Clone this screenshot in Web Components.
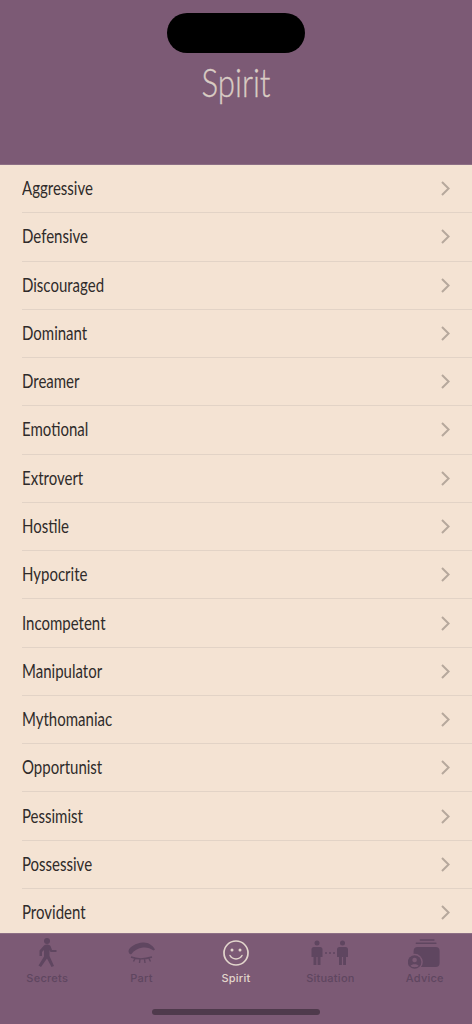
<!DOCTYPE html>
<html><head><meta charset="utf-8"><style>
html,body{margin:0;padding:0;width:472px;height:1024px;overflow:hidden;background:#f4e3d3}
</style></head><body>
<template id="sc"><style>:host{display:block;position:relative;width:472px;height:1024px;overflow:hidden;background:#f4e3d3}</style><slot></slot></template>
<template id="h"><style>
:host{display:block;height:165px;background:#7c5a75;box-sizing:border-box;position:relative;border-bottom:1px solid #8d6f85}
.island{position:absolute;left:167px;top:13px;width:138px;height:40px;border-radius:20px;background:#000}
.t{display:block;text-align:center;padding-top:59px;font:300 39px/46px Lato,sans-serif;-webkit-text-stroke:.35px #d9ccc4;color:#d9ccc4;transform:scaleX(.8);transform-origin:50% 0}
</style><div class="island"></div><span class="t"><slot></slot></span></template>
<template id="r"><style>
:host{display:block;height:48.27px;padding-left:22px;box-sizing:border-box}
.w{height:100%;box-sizing:border-box;border-bottom:1px solid #e2d3c6;display:flex;align-items:center;justify-content:space-between;padding-right:22px}
.l{display:inline-block;padding-bottom:3px;font:400 20px/24px Lato,sans-serif;color:#2f2b2a;white-space:nowrap;transform:scaleX(.75);transform-origin:0 50%}
svg{width:9px;height:15px;display:block}
</style><div class="w"><span class="l"><slot></slot></span><svg viewBox="0 0 9 15"><path d="M1 1l6.600 6.500L1 14" fill="none" stroke="#b6a89c" stroke-width="2"/></svg></div></template>
<template id="tb"><style>
:host{display:block;position:absolute;left:0;right:0;bottom:0;height:91px;background:#7c5a75;border-top:1px solid #8d6f85;box-sizing:border-box}
.g{display:grid;grid-template-columns:repeat(5,1fr)}
.bar{position:absolute;left:152px;top:75px;width:168px;height:6px;border-radius:3px;background:#4f3a4c}
</style><div class="g"><slot></slot></div><div class="bar"></div></template>
<template id="ti"><style>
:host{display:flex;flex-direction:column;align-items:center;color:#5f4660}
:host([active]){color:#e2d5cc}
.i{height:32px;width:44px;display:flex;align-items:center;justify-content:center;margin-top:3px}
.l{font:500 11px/13px Inter,"Liberation Sans",sans-serif;margin-top:2.5px;letter-spacing:.25px;text-rendering:geometricPrecision}
</style><div class="i"><slot name="icon"></slot></div><span class="l"><slot></slot></span></template>
<script>
function def(n,id){customElements.define(n,class extends HTMLElement{constructor(){super();this.attachShadow({mode:'open'}).appendChild(document.getElementById(id).content.cloneNode(true))}})}
def('app-screen','sc');def('app-header','h');def('list-row','r');def('tab-bar','tb');def('tab-item','ti');
const items=["Aggressive","Defensive","Discouraged","Dominant","Dreamer","Emotional","Extrovert","Hostile","Hypocrite","Incompetent","Manipulator","Mythomaniac","Opportunist","Pessimist","Possessive","Provident"];
const icons={
Secrets:'<svg slot="icon" width="24" height="30" viewBox="0 0 24 30" fill="currentColor"><circle cx="12" cy="3" r="3"/><path d="M9 7.500C10.500 6 14 6 15.500 8L17 12H21.500V14H15.500L14.500 12V18L19 28L16.500 29L12 20.500L6 29L3.500 27.500L9 18.500V12L7 14V18H4.500V12.500z"/></svg>',
Part:'<svg slot="icon" width="28" height="26" viewBox="0 0 28 26" fill="currentColor"><path d="M.5 11C1 7 8 3 15 2.500C20 2.200 24.500 5 27 9.500L25.500 10.500C22 8 19 7 15 7.500C10 8.200 6 10.500 3.500 14C2 15 .5 13 .5 11z"/><path d="M3 17C8 19 16 19.500 24 17M7 18.500L5.500 21.500M12 19L11.500 23M16.500 19L17 23M21 18.500L22.500 21.500" fill="none" stroke="currentColor" stroke-width="1.400"/></svg>',
Spirit:'<svg slot="icon" width="26" height="26" viewBox="0 0 26 26" fill="none" stroke="currentColor"><circle cx="13" cy="13" r="12" stroke-width="1.700"/><circle cx="9" cy="10" r="1.500" fill="currentColor" stroke="none"/><circle cx="17" cy="10" r="1.500" fill="currentColor" stroke="none"/><path d="M7 15.500c2.500 4.500 9.500 4.500 12 0" stroke-width="1.500" stroke-linecap="round"/></svg>',
Situation:'<svg slot="icon" width="38" height="26" viewBox="0 0 38 26" fill="currentColor"><circle cx="6" cy="3" r="2.500"/><circle cx="31.500" cy="3" r="2.500"/><path d="M.5 9.500Q.5 7 3 7H9Q11.500 7 11.500 9.500V17H9.500V25H6.600V17H5.400V25H2.500V17H.5z"/><path d="M26 9.500Q26 7 28.500 7H34.500Q37 7 37 9.500V17H35V25H32.100V17H30.900V25H28V17H26z"/><circle cx="15" cy="13" r="1"/><circle cx="19" cy="13" r="1"/><circle cx="23" cy="13" r="1"/></svg>',
Advice:'<svg slot="icon" width="34" height="32" viewBox="0 0 34 32" fill="currentColor"><rect x="11.600" y="2.300" width="15" height="1.400" rx=".7"/><rect x="7.600" y="5.600" width="21" height="1.400" rx=".7"/><rect x="5.600" y="10" width="26" height="20" rx="4"/><circle cx="6.600" cy="25" r="8.200" fill="#7c5a75"/><circle cx="6.600" cy="25" r="6.800"/><circle cx="6.600" cy="23" r="2.300" fill="#7c5a75"/><path d="M2.500 29c.8-2.500 7.400-2.500 8.200 0-2 1.600-6.200 1.600-8.200 0z" fill="#7c5a75"/></svg>'};
const s=document.createElement('app-screen');
s.innerHTML='<app-header>Spirit</app-header>'+items.map(t=>`<list-row>${t}</list-row>`).join('')+'<tab-bar>'+Object.keys(icons).map(k=>`<tab-item${k==='Spirit'?' active':''}>${icons[k]}${k}</tab-item>`).join('')+'</tab-bar>';
document.body.appendChild(s);
</script></body></html>
